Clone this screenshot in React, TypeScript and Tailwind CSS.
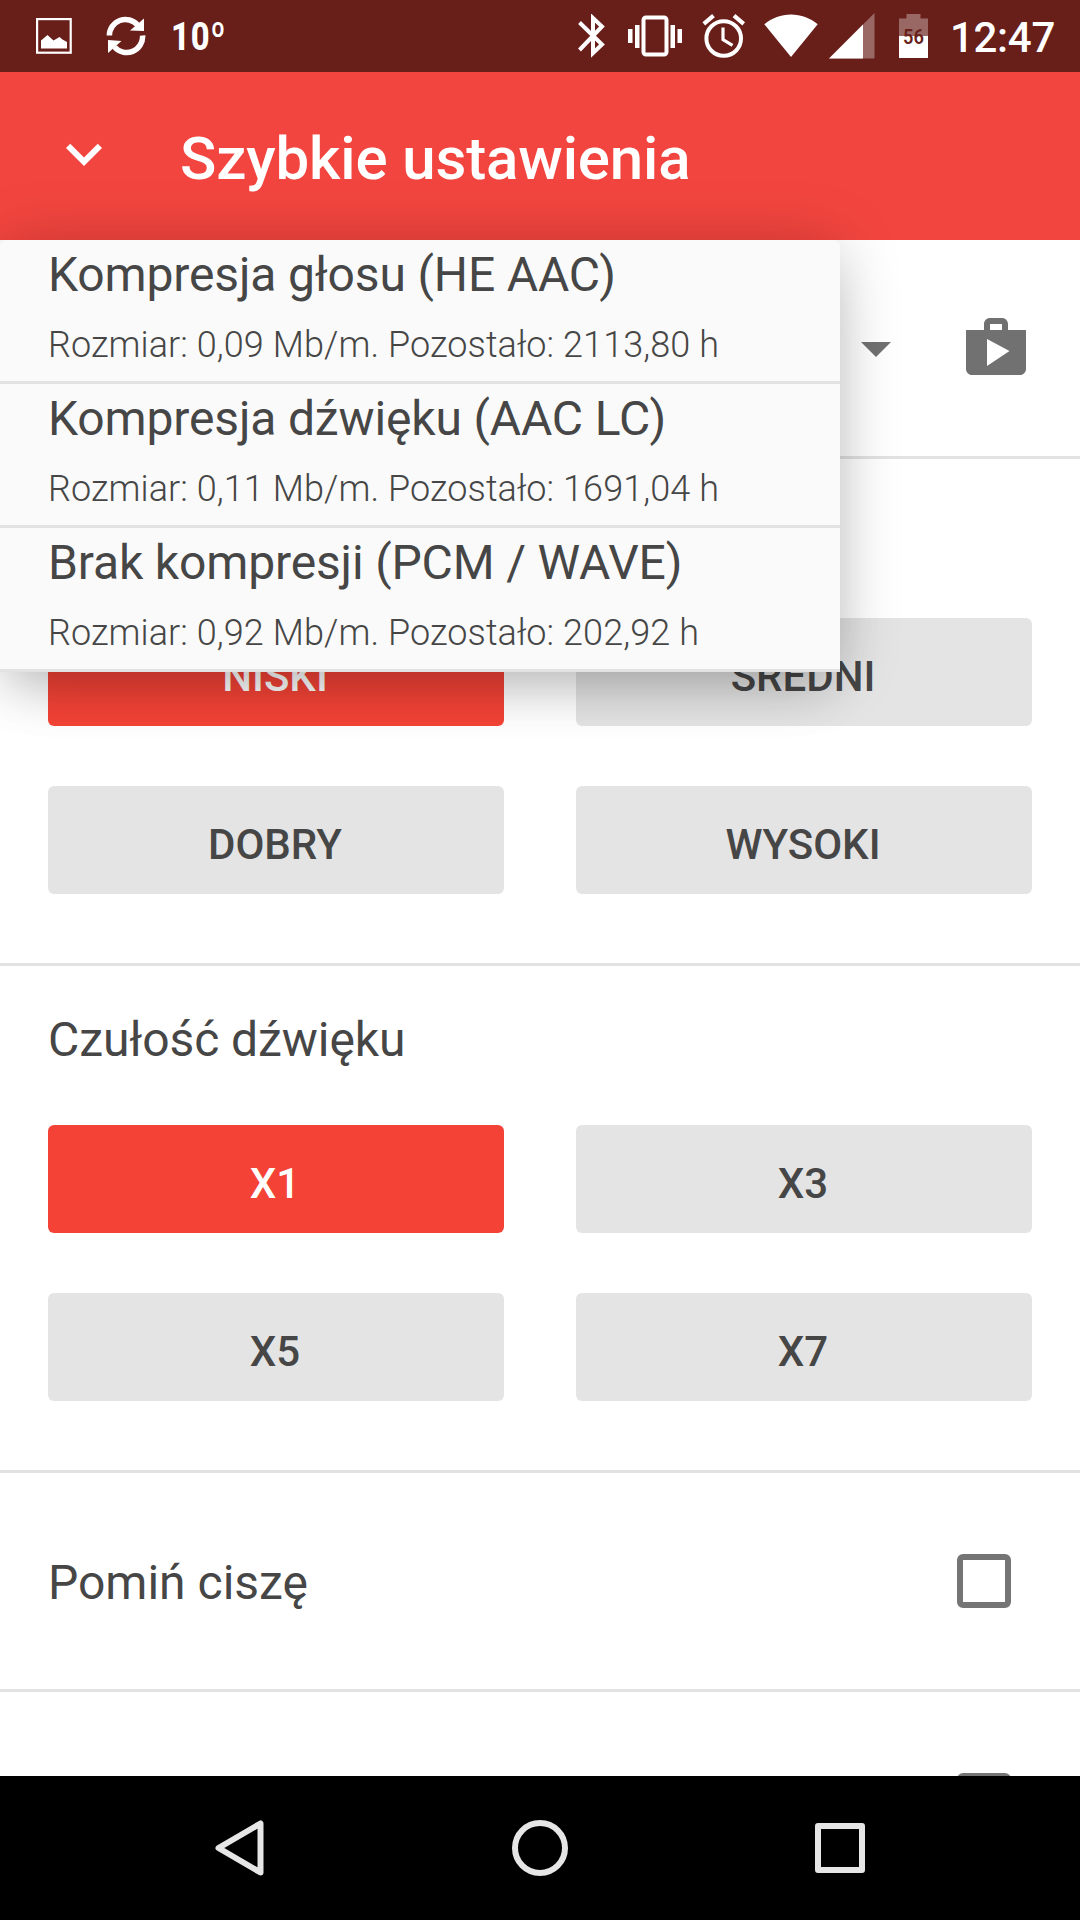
const formats = [
  { name: "Kompresja głosu (HE AAC)", info: "Rozmiar: 0,09 Mb/m. Pozostało: 2113,80 h" },
  { name: "Kompresja dźwięku (AAC LC)", info: "Rozmiar: 0,11 Mb/m. Pozostało: 1691,04 h" },
  { name: "Brak kompresji (PCM / WAVE)", info: "Rozmiar: 0,92 Mb/m. Pozostało: 202,92 h" },
];

function StatusBar() {
  return (
    <div className="h-[72px] bg-[#681e19] text-white flex items-center justify-between pl-9 pr-[25px]">
      <div className="flex items-center">
        <svg width="36" height="36" viewBox="0 0 36 36" fill="none">
          <rect x="1.1" y="1.1" width="33.6" height="33.6" stroke="currentColor" strokeWidth="2.2" />
          <path d="M5 30.500V22.500l6.500-5.500 6 5.500 6-3.500 3 2.500 4.500 2.500v6.500z" fill="currentColor" />
        </svg>
        <svg className="ml-[34px]" width="40" height="40" viewBox="0 0 40 40" fill="none">
          <path d="M3.400 19.500A16 16 0 0 1 31.500 9" stroke="currentColor" strokeWidth="5.500" />
          <path d="M38 2.500v12.500l-14-.5z" fill="currentColor" />
          <path d="M36.600 19.500A16 16 0 0 1 8.500 31" stroke="currentColor" strokeWidth="5.500" />
          <path d="M2 37V24l13.500 1z" fill="currentColor" />
        </svg>
        <div className="ml-[25px] w-[54px] h-[46px] pt-[1px]">
          <div className="origin-left scale-x-[0.84] text-[39px] leading-[46px] font-extrabold tracking-[1px] whitespace-nowrap">10º</div>
        </div>
      </div>
      <div className="flex items-center">
        <svg width="28" height="44" viewBox="0 0 28 44" fill="none" stroke="currentColor" strokeWidth="4">
          <path d="M1.500 8.500 24 30.500 15 39V4l9 8.500L1.500 36" />
        </svg>
        <svg className="ml-[22px]" width="54" height="42" viewBox="0 0 54 42" fill="currentColor">
          <path d="M0 14h4.500v14H0zM7 10h4.500v23H7zM42.500 10H47v23h-4.500zM49.500 14H54v14h-4.500z" />
          <rect x="15.500" y="2.500" width="23" height="37" rx="2.500" fill="none" stroke="currentColor" strokeWidth="4" />
        </svg>
        <svg className="ml-[20px]" width="44" height="44" viewBox="0 0 44 44" fill="none" stroke="currentColor">
          <circle cx="21.700" cy="24.500" r="17.300" strokeWidth="4" />
          <path d="M21 13.500v12.200l9.500 5.600" strokeWidth="3.200" />
          <path d="M1.800 9.800 11.500 1.700M32 1.700l9.700 8.100" strokeWidth="4.200" />
        </svg>
        <svg className="ml-[18px]" width="54" height="44" viewBox="0 0 54 44" fill="currentColor">
          <path d="M27 43 .3 10.300C8 4 17 .5 27 .5s19 3.500 26.700 9.800z" />
        </svg>
        <svg className="ml-[11px]" width="46" height="46" viewBox="0 0 46 46" fill="currentColor">
          <path d="M0 45.500 45.500 0v45.500z" opacity=".33" />
          <path d="M0 45.500 34 11.500v34z" />
        </svg>
        <div className="relative ml-[24px] w-[29px] h-[44px]">
          <svg width="29" height="44" viewBox="0 0 29 44" fill="currentColor">
            <path d="M0 4.500h7.500V0h14v4.500H29V22H0z" opacity=".33" />
            <path d="M0 22h29v22H0z" />
          </svg>
          <div className="absolute inset-x-0 top-[12px] text-center scale-x-[0.87] text-[21px] leading-[22px] font-semibold text-[#681e19]">56</div>
        </div>
        <div className="ml-[22px] pt-[3px] text-[42px] leading-[48px] font-medium tracking-[-0.3px]">12:47</div>
      </div>
    </div>
  );
}

function Option({ label, active }: { label: string; active?: boolean }) {
  return (
    <button
      className={
        "h-[108px] pt-[9px] pr-[2px] rounded-[6px] text-[42px] leading-[50px] font-medium " +
        (active ? "bg-[#f44336] text-white" : "bg-[#e4e4e4] text-[#464646]")
      }
    >
      {label}
    </button>
  );
}

function OptionSection({ title, options }: { title?: string; options: string[] }) {
  return (
    <section className="px-12 pt-[46px] pb-[69px] border-b-[3px] border-[#e2e2e2]">
      <h2 className="h-[56px] text-5xl leading-[56px] tracking-[-0.07px] mb-[57px]">{title}</h2>
      <div className="grid grid-cols-2 gap-x-[72px] gap-y-[60px]">
        {options.map((label, i) => (
          <Option key={label} label={label} active={i === 0} />
        ))}
      </div>
    </section>
  );
}

function CheckRow({ label }: { label?: string }) {
  return (
    <div className="h-[219px] shrink-0 pl-12 pr-[69px] flex items-center justify-between border-b-[3px] border-[#e2e2e2]">
      <span className="text-5xl leading-[56px] pt-1">{label}</span>
      <span className="size-[54px] border-[6px] border-[#757575] rounded-[6px]" />
    </div>
  );
}

function FormatMenu() {
  return (
    <div className="absolute left-0 top-0 w-[840px] bg-[#fafafa] rounded-t-[6px] shadow-[0_2px_64px_rgba(0,0,0,0.19),0_28px_50px_-14px_rgba(0,0,0,0.18)]">
      {formats.map((f) => (
        <div key={f.name} className="h-36 pl-12 pt-[7px] border-b-[3px] border-[#e2e2e2]">
          <div className="text-5xl leading-[56px] tracking-[-0.15px]">{f.name}</div>
          <div className="mt-[21px] text-4xl leading-[42px] font-light tracking-[0.08px]">{f.info}</div>
        </div>
      ))}
    </div>
  );
}

export default function App() {
  return (
    <div className="w-[1080px] h-[1920px] flex flex-col overflow-hidden bg-white text-[#464646] font-['Roboto',sans-serif]">
      <StatusBar />
      <header className="h-[168px] shrink-0 bg-[#f3453f] text-white flex items-center pl-12">
        <svg className="mb-1" width="72" height="72" viewBox="0 0 24 24" fill="currentColor">
          <path d="M16.590 8.590 12 13.170 7.410 8.590 6 10l6 6 6-6z" />
        </svg>
        <h1 className="ml-[60px] pt-[5px] text-6xl leading-[70px] font-medium tracking-[-0.13px]">Szybkie ustawienia</h1>
      </header>

      <main className="relative h-[1536px] shrink-0">
        <div className="h-full flex flex-col overflow-hidden">
          <div className="h-[219px] shrink-0 pr-12 flex items-center justify-end gap-12 border-b-[3px] border-[#e2e2e2] text-[#717171]">
            <svg width="72" height="72" viewBox="0 0 24 24" fill="currentColor">
              <path d="m7 10 5 5 5-5z" />
            </svg>
            <svg width="72" height="72" viewBox="0 0 24 24" fill="currentColor">
              <path d="M16 6V4c0-1.110-.89-2-2-2h-4c-1.110 0-2 .89-2 2v2H2v13c0 1.110.89 2 2 2h16c1.110 0 2-.89 2-2V6h-6zm-6-2h4v2h-4V4zM9 18V9l7.500 4L9 18z" />
            </svg>
          </div>
          <OptionSection options={["NISKI", "ŚREDNI", "DOBRY", "WYSOKI"]} />
          <OptionSection title="Czułość dźwięku" options={["X1", "X3", "X5", "X7"]} />
          <CheckRow label="Pomiń ciszę" />
          <CheckRow />
        </div>
        <FormatMenu />
      </main>

      <nav className="relative h-36 shrink-0 bg-black text-[#e6e6e6] flex items-center justify-center gap-[228px]">
        <svg width="72" height="72" viewBox="0 0 72 72" fill="none" stroke="currentColor" strokeWidth="6" strokeLinejoin="round">
          <path d="M56.500 11.500v49L14.500 36z" />
        </svg>
        <svg width="72" height="72" viewBox="0 0 72 72" fill="none" stroke="currentColor" strokeWidth="6">
          <circle cx="36" cy="36" r="25" />
        </svg>
        <svg width="72" height="72" viewBox="0 0 72 72" fill="none" stroke="currentColor" strokeWidth="6" strokeLinejoin="round">
          <path d="M14 14h44v44H14z" />
        </svg>
      </nav>
    </div>
  );
}
